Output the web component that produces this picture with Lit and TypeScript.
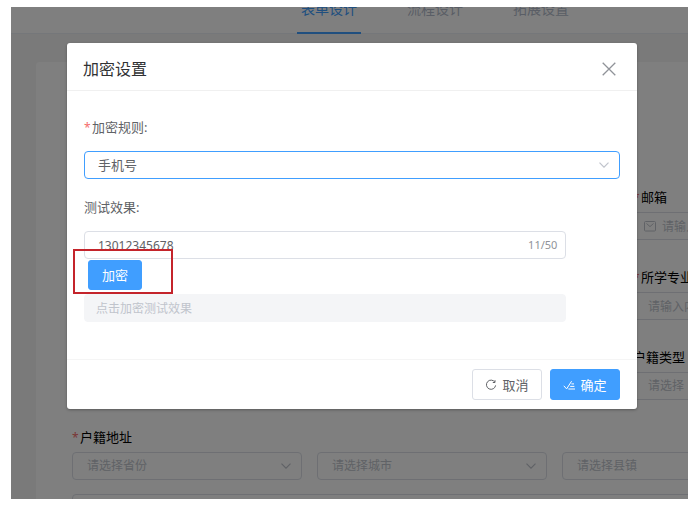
import { LitElement, html, css, svg } from "lit";
import { customElement, state } from "lit/decorators.js";

const chevron = html`<svg class="chevron" viewBox="0 0 10 6" aria-hidden="true">
  <path d="M.5.7 5 5.2 9.5.7" fill="none" stroke="currentColor" stroke-width="1.2" />
</svg>`;

const refresh = svg`<path d="M9.9 3.2A4.6 4.6 0 1 0 10.6 6.4M10 1.2V3.5H7.8" />`;
const finished = svg`<path d="M.8 6.8 3.6 9.9 8.6 2.2M8.4 4.9H11M7.2 7.4H11.4M5.4 10H12" />`;

@customElement("app-root")
export class AppRoot extends LitElement {
  @state() private sample = "13012345678";

  static styles = css`
    :host {
      display: block;
      box-sizing: border-box;
      height: 100vh;
      padding: 7px 11px 9px;
      background: #fff;
      color: #606266;
      font: 13px/20px "Noto Sans", "Noto Sans CJK SC", sans-serif;
    }
    * { box-sizing: border-box; }
    input, select, button { font: inherit; color: inherit; margin: 0; outline: none; }
    svg { display: block; flex: none; }
    .frame {
      position: relative;
      height: 100%;
      overflow: hidden;
      background: #f5f5f5;
    }
    .tabs {
      display: flex;
      align-items: flex-end;
      gap: 42px;
      height: 27px;
      padding-left: 286px;
      background: #fff;
      border-bottom: 1px solid #ebeef5;
    }
    .tab {
      flex: none;
      height: 35px;
      padding: 0 4px;
      margin-bottom: -1px;
      border-bottom: 2px solid transparent;
      color: #b4bccc;
      font-size: 14px;
      line-height: 20px;
      text-decoration: none;
    }
    .tab.active { color: #409eff; border-color: #409eff; }
    .card {
      margin: 28px 0 0 25px;
      padding: 125px 0 0 36px;
      min-height: 480px;
      background: #fff;
      border-radius: 4px 0 0 0;
    }
    .side { width: 55px; margin: 0 0 27px auto; }
    .caption { display: block; height: 20px; color: #000; white-space: nowrap; margin-bottom: 5px; }
    .req { display: inline-block; width: 8px; color: #f56c6c; font-size: 12px; }
    .box {
      display: flex;
      align-items: center;
      position: relative;
      width: 230px;
      height: 28px;
      border: 1px solid #dcdfe6;
      border-radius: 4px;
      background: #fff;
      color: #c0c4cc;
      font-size: 12px;
    }
    .box input, .box select {
      appearance: none;
      flex: 1;
      min-width: 0;
      height: 26px;
      padding: 0 14px;
      border: 0;
      background: none;
    }
    input::placeholder { color: #c0c4cc; opacity: 1; }
    .mail { width: 12px; height: 11px; margin-left: 10px; }
    .box .mail + input { padding-left: 6px; }
    .chevron { width: 10px; height: 6px; margin-right: 10px; color: #c0c4cc; }
    .box select { cursor: pointer; }
    .address { display: grid; grid-template-columns: repeat(3, 230px); gap: 14px 15px; }
    .address .wide { grid-column: 1 / -1; width: auto; }
    .overlay {
      position: absolute;
      inset: 0;
      padding: 36px 51px 0 56px;
      background: rgba(0, 0, 0, 0.5);
    }
    .dialog {
      background: #fff;
      border-radius: 3px;
      box-shadow: 0 1px 3px rgba(0, 0, 0, 0.3);
    }
    header {
      display: flex;
      align-items: center;
      justify-content: space-between;
      height: 48px;
      padding: 5px 21px 0 16px;
      border-bottom: 1px solid #f0f0f0;
    }
    h2 { margin: 0; color: #303133; font-size: 16px; font-weight: 400; line-height: 24px; }
    .close { padding: 0; border: 0; background: none; color: #909399; cursor: pointer; }
    .close svg { width: 14px; height: 14px; }
    .body { padding: 22px 17px 37px; }
    .label { display: block; height: 28px; line-height: 28px; margin-bottom: 10px; }
    .body .box { width: 100%; color: #606266; }
    .body .box input, .body .box select { padding: 0 13px; }
    .body .rule { border-color: #409eff; margin-bottom: 14px; font-size: 13px; }
    .trial { width: 90%; }
    .body .result { border-color: #f4f5f7; background: #f4f5f7; }
    .body .result input { padding: 0 11px; }
    .count { margin-right: 8px; color: #909399; font-size: 11px; }
    .row { position: relative; display: flex; padding: 1px 4px 4px; }
    .mark {
      position: absolute;
      top: -10px;
      left: -11px;
      width: 100px;
      height: 45px;
      border: 2px solid #c4242b;
      pointer-events: none;
      z-index: 1;
    }
    .btn {
      display: flex;
      align-items: center;
      justify-content: center;
      gap: 5px;
      height: 31px;
      padding: 0 14px;
      border: 1px solid #dcdfe6;
      border-radius: 3px;
      background: #fff;
      cursor: pointer;
    }
    .btn svg { width: 12px; height: 12px; fill: none; stroke: currentColor; }
    .primary { background: #409eff; border-color: #409eff; color: #fff; }
    .row .btn { height: 30px; padding: 0 13px; }
    footer {
      display: flex;
      justify-content: flex-end;
      gap: 8px;
      padding: 9px 17px;
      border-top: 1px solid #f5f5f5;
    }
    footer .btn { width: 70px; padding: 0; }
  `;

  private picker(name: string) {
    return html`<div class="box">
      <select aria-label=${name}><option>请选择${name}</option></select>${chevron}
    </div>`;
  }

  render() {
    return html`
      <div class="frame">
        <nav class="tabs">
          <a class="tab active" href="#form">表单设计</a>
          <a class="tab" href="#flow">流程设计</a>
          <a class="tab" href="#extend">拓展设置</a>
        </nav>
        <main class="card">
          <div class="side">
            <label class="caption" for="mail"><span class="req">*</span>邮箱</label>
            <div class="box">
              <svg class="mail" viewBox="0 0 12 11" fill="none" stroke="currentColor">
                <rect x=".5" y=".5" width="11" height="9.5" rx="1" />
                <path d="M2.5 2.5 6 5.6 9.5 2.5" />
              </svg>
              <input id="mail" placeholder="请输入邮箱" />
            </div>
          </div>
          <div class="side">
            <label class="caption" for="major"><span class="req">*</span>所学专业</label>
            <div class="box"><input id="major" placeholder="请输入内容" /></div>
          </div>
          <div class="side">
            <label class="caption" for="kind">户籍类型</label>
            <div class="box">
              <select id="kind"><option>请选择</option></select>
            </div>
          </div>
          <span class="caption"><span class="req">*</span>户籍地址</span>
          <div class="address">
            ${["省份", "城市", "县镇"].map((n) => this.picker(n))}
            <div class="box wide"><input aria-label="详细地址" /></div>
          </div>
        </main>
        <div class="overlay">
          <section class="dialog" role="dialog" aria-labelledby="title">
            <header>
              <h2 id="title">加密设置</h2>
              <button class="close" aria-label="关闭">
                <svg viewBox="0 0 14 14" fill="none" stroke="currentColor" stroke-width="1.3">
                  <path d="M.7.7 13.3 13.3M13.3.7.7 13.3" />
                </svg>
              </button>
            </header>
            <div class="body">
              <label class="label" for="rule"><span class="req">*</span>加密规则:</label>
              <div class="box rule">
                <select id="rule"><option>手机号</option></select>${chevron}
              </div>
              <label class="label" for="sample">测试效果:</label>
              <div class="trial">
                <div class="box">
                  <input
                    id="sample"
                    maxlength="50"
                    .value=${this.sample}
                    @input=${(e: Event) => (this.sample = (e.target as HTMLInputElement).value)}
                  />
                  <span class="count">${this.sample.length}/50</span>
                </div>
                <div class="row">
                  <button class="btn primary">加密</button>
                  <div class="mark"></div>
                </div>
                <div class="box result">
                  <input aria-label="加密结果" placeholder="点击加密测试效果" disabled />
                </div>
              </div>
            </div>
            <footer>
              <button class="btn"><svg viewBox="0 0 12 12">${refresh}</svg>取消</button>
              <button class="btn primary"><svg viewBox="0 0 12 12">${finished}</svg>确定</button>
            </footer>
          </section>
        </div>
      </div>
    `;
  }
}
